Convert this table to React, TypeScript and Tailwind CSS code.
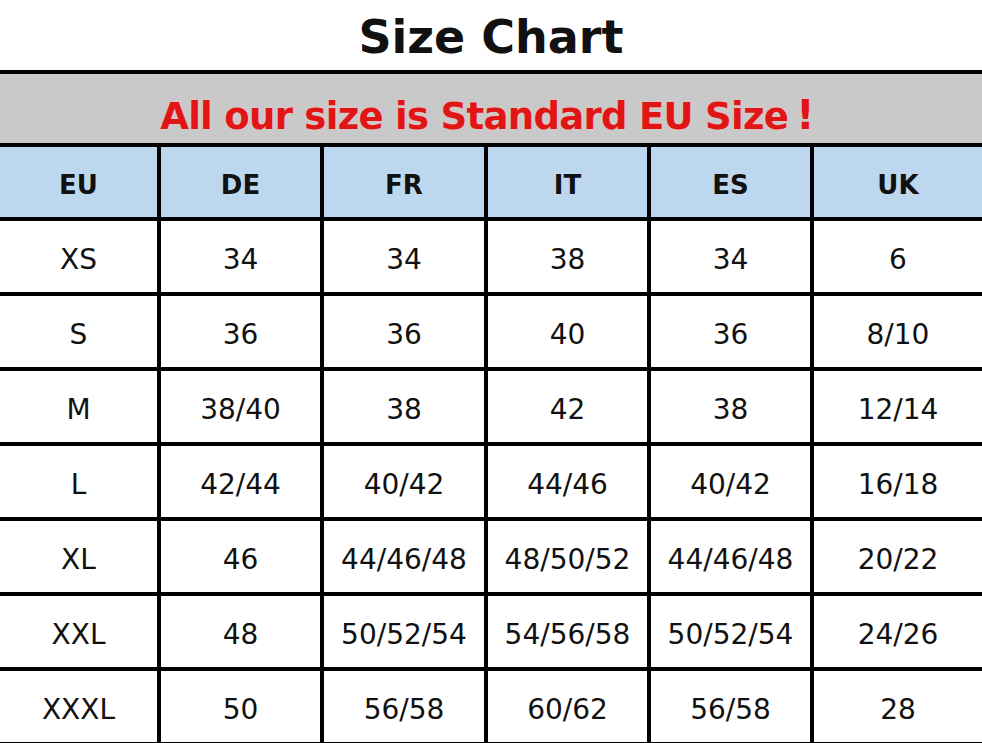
const HEADERS = ['EU', 'DE', 'FR', 'IT', 'ES', 'UK'];

const ROWS: string[][] = [
  ['XS', '34', '34', '38', '34', '6'],
  ['S', '36', '36', '40', '36', '8/10'],
  ['M', '38/40', '38', '42', '38', '12/14'],
  ['L', '42/44', '40/42', '44/46', '40/42', '16/18'],
  ['XL', '46', '44/46/48', '48/50/52', '44/46/48', '20/22'],
  ['XXL', '48', '50/52/54', '54/56/58', '50/52/54', '24/26'],
  ['XXXL', '50', '56/58', '60/62', '56/58', '28'],
];

export default function App() {
  return (
    <div className="w-[982px] h-[743px] overflow-hidden bg-white font-['DejaVu_Sans','Noto_Sans_CJK_SC',sans-serif] text-[#111]">
      {/* Title */}
      <div className="h-[70px] flex items-center justify-center pt-[4px] text-[46px] font-bold leading-none">
        Size Chart
      </div>

      {/* Red notice band */}
      <div className="h-[77px] border-y-4 border-black bg-[#c9c9c9] flex items-center justify-center">
        <span className="pt-[12px] pr-[8px] leading-none text-[37px] font-bold text-[#e01515] tracking-[-0.7px] [text-shadow:0_0_2px_#ffc0c0]">
          All our size is Standard EU Size<span className="ml-[8px] text-[40px]">!</span>
        </span>
      </div>

      {/* Table */}
      <div className="grid grid-cols-[157px_159px_160px_159px_159px_1fr] gap-[4px] bg-black pb-[4px]">
        {HEADERS.map((h) => (
          <div key={h} className="h-[70px] bg-[#bdd7ee] flex items-center justify-center pt-[6px] text-[26px] font-bold">
            {h}
          </div>
        ))}
        {ROWS.map((row, i) =>
          row.map((cell, j) => (
            <div key={`${i}-${j}`} className="h-[71px] bg-white flex items-center justify-center pt-[6px] text-[28px]">
              {cell}
            </div>
          ))
        )}
      </div>
    </div>
  );
}
